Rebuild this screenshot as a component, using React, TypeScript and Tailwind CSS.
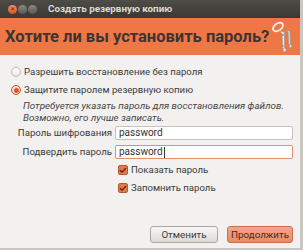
import { Check } from "lucide-react";

function KeysIcon() {
  return (
    <svg width="22" height="32" viewBox="0 0 22 32" fill="none">
      <ellipse cx="7" cy="6" rx="5.5" ry="3.5" stroke="#f4f4f2" strokeWidth="1.8" transform="rotate(-35 7 6)" />
      <path d="M14 9 L19 10 L19.5 23 L21 25 L19 27.5 L18 25.5 L18.5 24 L17.5 22.5 L17 11 Z" fill="#d9d9d6" stroke="#8e8e8a" strokeWidth="0.6" />
      <path d="M8 10 L13.5 11 L13.5 27 L15.5 29 L13.5 31 L12 29.5 L12.5 28 L11.5 26.5 L12.5 25 L11.5 23.5 L11 12.5 Z" fill="#efefed" stroke="#96968f" strokeWidth="0.6" />
      <circle cx="12" cy="14" r="1" fill="#8e8e8a" />
    </svg>
  );
}

function Radio({ checked }: { checked?: boolean }) {
  return (
    <span
      className={
        "flex h-[10px] w-[10px] shrink-0 items-center justify-center rounded-full border " +
        (checked ? "border-[#c45a33] bg-[#f3d9cd]" : "border-[#bdbab4] bg-gradient-to-b from-white to-[#e9e7e4]")
      }
    >
      {checked && <span className="h-[5px] w-[5px] rounded-full bg-[#dd5a28]" />}
    </span>
  );
}

function CheckBox() {
  return (
    <span className="flex h-[10px] w-[10px] shrink-0 items-center justify-center rounded-[2px] border border-[#b9582f] bg-[#e27a4c]">
      <Check size={9} strokeWidth={4} color="#5b2612" />
    </span>
  );
}

export default function App() {
  return (
    <div className="flex h-[250px] w-[303px] flex-col overflow-hidden border-r-[3px] border-b-[2px] border-[#c9c6c1] bg-[#f2f1f0] font-['Roboto',sans-serif] text-[#3a3a3a]">
      {/* title bar */}
      <div className="flex h-[18px] shrink-0 items-center bg-gradient-to-b from-[#4d4c47] to-[#393834] pl-[8px]">
        <div className="flex items-center gap-[1px]">
          <span className="flex h-[9px] w-[9px] items-center justify-center rounded-full bg-gradient-to-b from-[#f3916a] to-[#d64f1b] text-[7px] leading-none text-[#5a2a12]">
            ×
          </span>
          <span className="h-[9px] w-[9px] rounded-full bg-gradient-to-b from-[#8a8883] to-[#5a5954]" />
          <span className="h-[9px] w-[9px] rounded-full bg-gradient-to-b from-[#8a8883] to-[#5a5954]" />
        </div>
        <span className="ml-[11px] text-[9.8px] font-bold leading-none text-[#dfdbd2]">Создать резервную копию</span>
      </div>

      {/* orange header */}
      <div className="flex h-[37px] shrink-0 items-center justify-between bg-[#ef7745] pl-[5px] pr-[7px]">
        <span className="pt-[2px] text-[16.5px] font-bold leading-none text-[#3b3531]">
          Хотите ли вы установить пароль?
        </span>
        <KeysIcon />
      </div>

      {/* body */}
      <div className="flex flex-1 flex-col pr-[7px] pl-[11px] pt-[12px] text-[9.6px] leading-none">
        <label className="flex items-center gap-[3px]">
          <Radio />
          <span>Разрешить восстановление без пароля</span>
        </label>
        <label className="mt-[8px] flex items-center gap-[3px]">
          <Radio checked />
          <span>Защитите паролем резервную копию</span>
        </label>
        <p className="mt-[5px] whitespace-nowrap pl-[12px] text-[9.8px] italic leading-[12px] text-[#454545]">
          Потребуется указать пароль для восстановления файлов.
          <br />
          Возможно, его лучше записать.
        </p>

        <div className="mt-[2px] grid grid-cols-[101px_1fr] items-center gap-x-[3px] gap-y-[5px]">
          <span className="text-right">Пароль шифрования</span>
          <div className="flex h-[14px] items-center rounded-[2px] border border-[#c6c3be] bg-white px-[3px] text-[10px] text-[#333]">
            password
          </div>
          <span className="text-right">Подвердить пароль</span>
          <div className="flex h-[14px] items-center rounded-[2px] border border-[#e3906c] bg-white px-[3px] text-[10px] text-[#333]">
            password<span className="ml-[1px] h-[11px] w-[1px] bg-[#333]" />
          </div>
          <span />
          <label className="mt-[1px] flex items-center gap-[3px] pl-[3px]">
            <CheckBox />
            <span>Показать пароль</span>
          </label>
          <span />
          <label className="mt-[3px] flex items-center gap-[3px] pl-[3px]">
            <CheckBox />
            <span>Запомнить пароль</span>
          </label>
        </div>

        <div className="mt-auto mb-[5px] flex justify-end gap-[9px]">
          <button className="h-[17px] w-[68px] rounded-[3px] border border-[#aaa7a2] bg-gradient-to-b from-[#f8f7f6] to-[#dcdad6] text-[9.8px] text-[#3c3c3c]">
            Отменить
          </button>
          <button className="h-[17px] w-[66px] rounded-[3px] border border-[#c8714d] bg-gradient-to-b from-[#f5a586] to-[#eb8a63] text-[9.8px] text-[#4a2a1c]">
            Продолжить
          </button>
        </div>
      </div>
    </div>
  );
}
